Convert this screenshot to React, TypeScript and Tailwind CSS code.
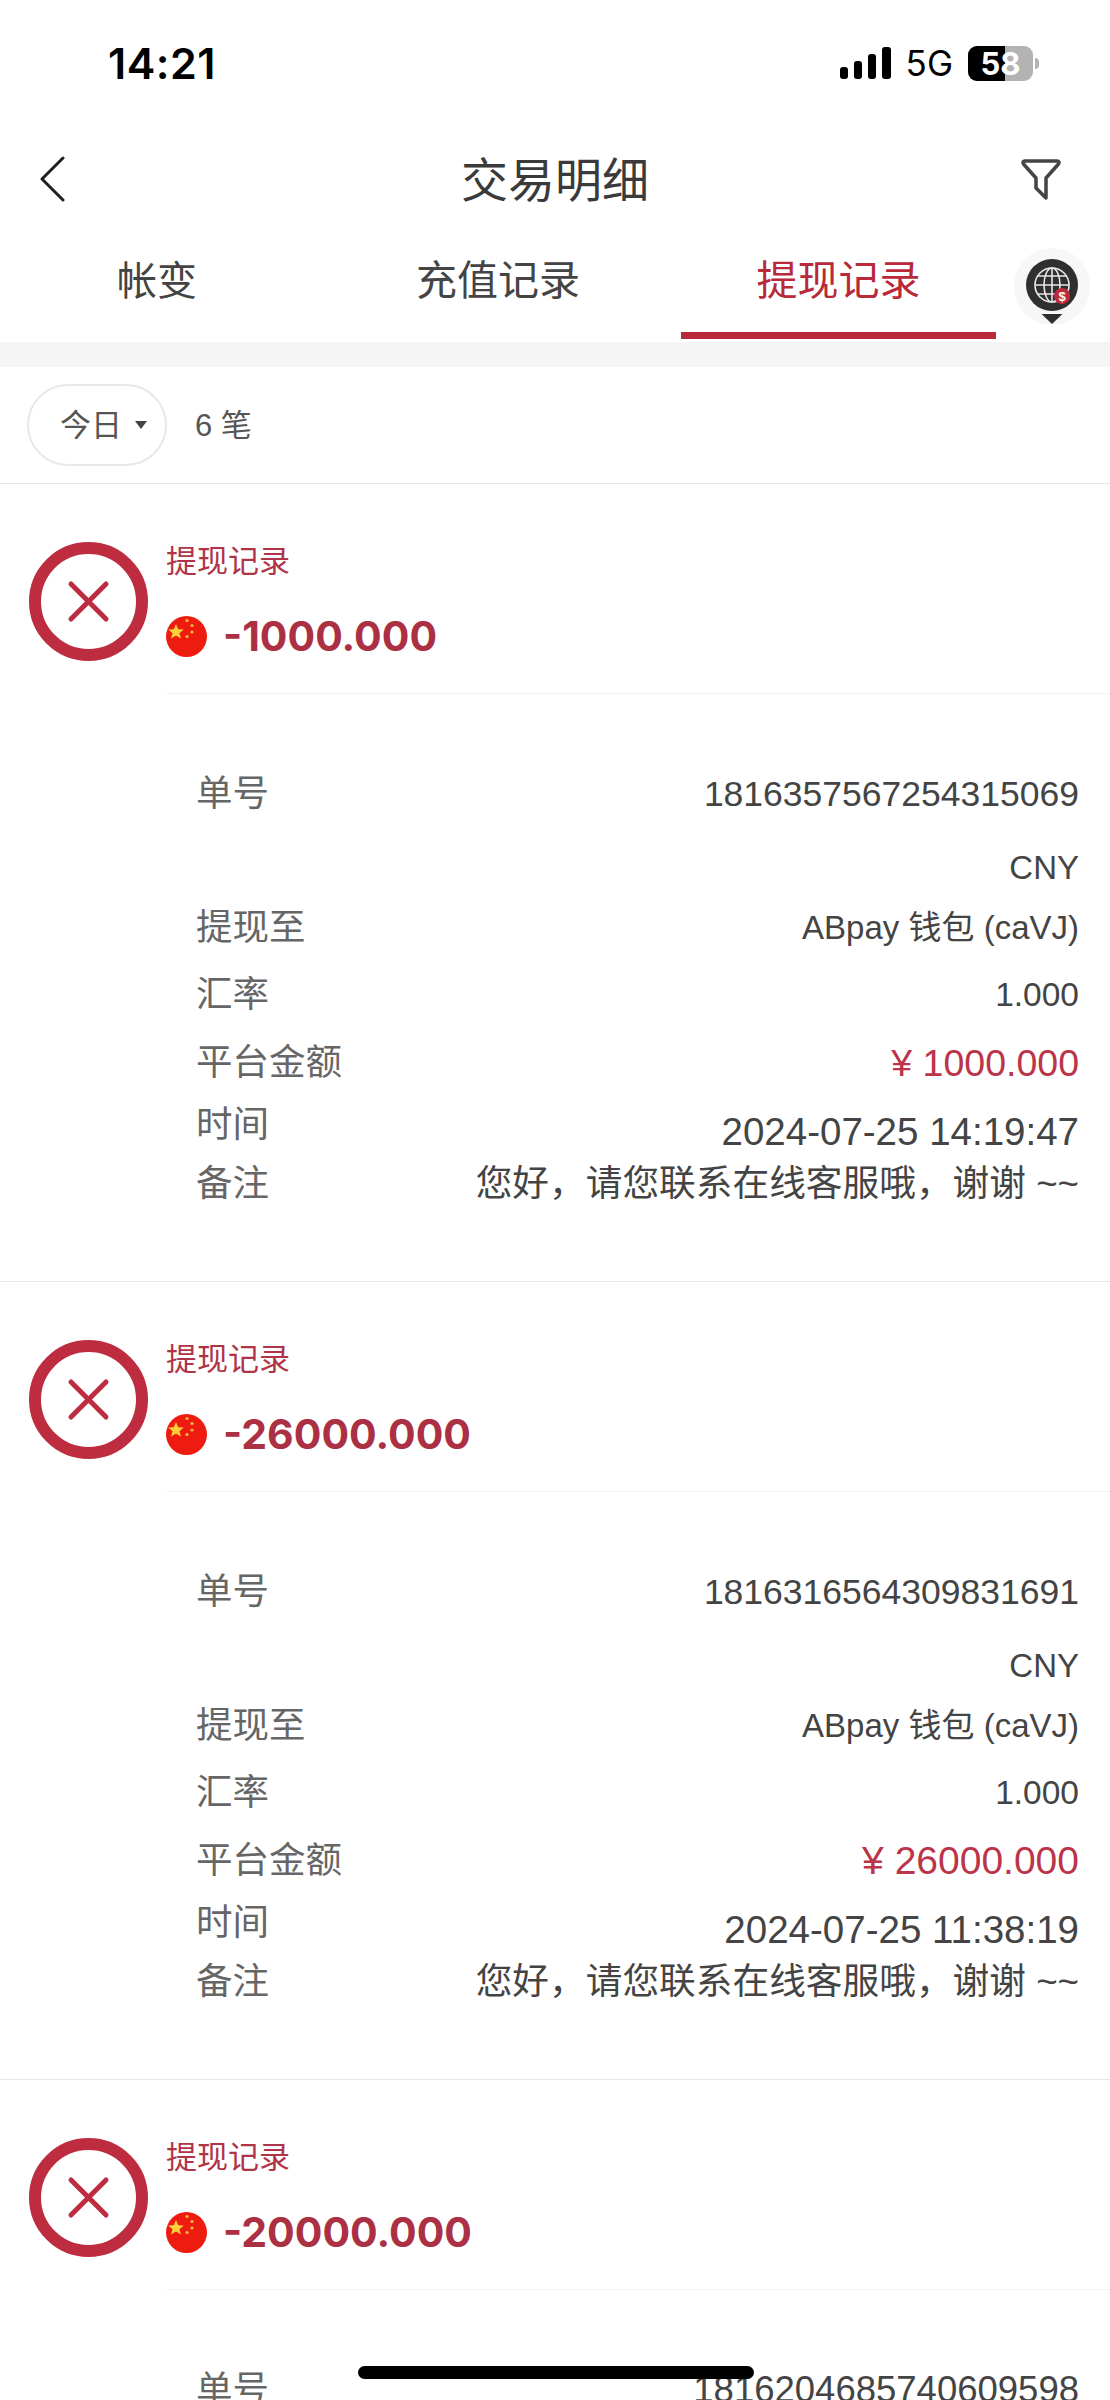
import React from 'react';

const FONT = '"Liberation Sans", "Noto Sans CJK SC", sans-serif';

interface Tx {
  amount: string;
  orderNo: string;
  orderClass: string;
  platform: string;
  platformClass: string;
  time: string;
}

const records: Tx[] = [
  { amount: '-1000.000', orderNo: '1816357567254315069', orderClass: 'text-[35.5px]', platform: '¥ 1000.000', platformClass: 'text-[37.5px]', time: '2024-07-25 14:19:47' },
  { amount: '-26000.000', orderNo: '1816316564309831691', orderClass: 'text-[35.5px]', platform: '¥ 26000.000', platformClass: 'text-[39px]', time: '2024-07-25 11:38:19' },
  { amount: '-20000.000', orderNo: '1816204685740609598', orderClass: 'text-[36.5px]', platform: '¥ 20000.000', platformClass: 'text-[39px]', time: '2024-07-25 10:02:11' },
];

const StatusBar = () => (
  <div className="flex h-[126px] items-center justify-between pl-[108px] pr-[71px] text-black">
    <span className="text-[43px] font-semibold leading-none tracking-[0.5px]" style={{ fontFamily: 'Inter, sans-serif' }}>14:21</span>
    <div className="flex items-center">
      <svg width="52" height="32" viewBox="0 0 52 32" fill="#000">
        <rect x="0" y="20" width="8" height="12" rx="3" />
        <rect x="14" y="14" width="8" height="18" rx="3" />
        <rect x="28" y="7" width="8" height="25" rx="3" />
        <rect x="42" y="0" width="9" height="32" rx="3" />
      </svg>
      <span className="ml-[14px] text-[35px] leading-none" style={{ fontFamily: 'Inter, sans-serif' }}>5G</span>
      <div className="relative ml-[15px] flex h-[35px] w-[65px] items-center justify-center overflow-hidden rounded-[9px] bg-[#b3b3b3]">
        <div className="absolute inset-y-0 left-0 w-[37px] bg-black" />
        <span className="relative text-[31px] font-bold leading-none text-white" style={{ fontFamily: 'Inter, sans-serif' }}>58</span>
      </div>
      <div className="ml-[2px] h-[11px] w-[4px] rounded-r-full bg-[#b3b3b3]" />
    </div>
  </div>
);

const NavBar = () => (
  <div className="grid h-[108px] grid-cols-[1fr_auto_1fr] items-center pl-[39px] pr-[49px]">
    <svg className="-mt-[3px]" width="26" height="46" viewBox="0 0 26 46" fill="none" stroke="#1f1f1f" strokeWidth="3" strokeLinecap="round" strokeLinejoin="round">
      <path d="M24 2 L3 23 L24 44" />
    </svg>
    <h1 className="ml-[10px] text-[47px] font-normal leading-none text-[#3a3a3a]">交易明细</h1>
    <svg className="justify-self-end" width="40" height="42" viewBox="0 0 40 42" fill="none" stroke="#444" strokeWidth="3.5" strokeLinejoin="round">
      <path d="M4 2 H36 Q39 2 37.5 5 L25 19 V39 L15 29 V19 L2.5 5 Q1 2 4 2 Z" />
    </svg>
  </div>
);

const Tabs = () => (
  <div className="flex h-[108px]">
    <div className="-ml-px flex gap-[25px]">
      <div className="h-[105px] w-[316px] pt-[25px] text-center text-[40px] leading-[44px] text-[#444]">帐变</div>
      <div className="h-[105px] w-[316px] pt-[25px] text-center text-[41px] leading-[44px] text-[#444]">充值记录</div>
      <div className="h-[105px] w-[315px] border-b-[7px] border-[#b8293a] pt-[25px] text-center text-[41px] leading-[44px] text-[#b8293a]">提现记录</div>
    </div>
    <div className="ml-[18px] mt-[14px] flex h-[77px] w-[76px] flex-col items-center rounded-full bg-[#f7f7f7] pt-[11px]">
      <svg width="54" height="66" viewBox="0 0 54 66">
        <circle cx="27" cy="26" r="26" fill="#2f2f2f" />
        <g fill="none" stroke="#e8e8e8" strokeWidth="1.6">
          <circle cx="27" cy="26" r="17" />
          <ellipse cx="27" cy="26" rx="8" ry="17" />
          <path d="M27 9 V43 M10 26 H44 M12.5 17 H41.5 M12.5 35 H41.5" />
        </g>
        <circle cx="37" cy="37" r="8" fill="#c0293c" />
        <text x="37" y="42" textAnchor="middle" fontSize="13" fontWeight="700" fill="#fff" fontFamily="Liberation Sans, sans-serif">$</text>
        <path d="M16.5 55 H37.5 L27 65 Z" fill="#2f2f2f" />
      </svg>
    </div>
  </div>
);

const FilterRow = () => (
  <div className="flex h-[117px] items-center border-b border-[#e6e6e6] pl-[27px]">
    <div className="flex h-[82px] w-[140px] items-center rounded-[41px] border-2 border-[#e8e8e8] pl-[31px] text-[#555]">
      <span className="text-[31px] leading-none">今日</span>
      <span className="ml-[13px] h-0 w-0 border-x-[6px] border-t-[8px] border-x-transparent border-t-[#444]" />
    </div>
    <span className="ml-[28px] text-[31px] leading-none text-[#555]">6 笔</span>
  </div>
);

const FailIcon = () => (
  <svg className="mt-[58px] shrink-0" width="119" height="119" viewBox="0 0 119 119" fill="none" stroke="#bd2c3f">
    <circle cx="59.5" cy="59.5" r="53.5" strokeWidth="12" />
    <path d="M42 42 L77 77 M77 42 L42 77" strokeWidth="5" strokeLinecap="round" />
  </svg>
);

const Flag = () => (
  <svg className="shrink-0" width="41" height="41" viewBox="0 0 41 41">
    <circle cx="20.5" cy="20.5" r="20.5" fill="#ee1c10" />
    <path d="M10 8 L12.2 13.3 L17.8 13.6 L13.4 17.2 L15 22.6 L10 19.6 L5 22.6 L6.6 17.2 L2.2 13.6 L7.8 13.3 Z" fill="#fbd13a" />
    <g fill="#f6b93a">
      <circle cx="21" cy="4.5" r="1.6" />
      <circle cx="26" cy="9.5" r="1.6" />
      <circle cx="26" cy="16" r="1.6" />
      <circle cx="21" cy="20.5" r="1.6" />
    </g>
  </svg>
);

const Record = ({ tx }: { tx: Tx }) => (
  <div className="border-b border-[#e8e8e8]">
    <div className="flex pl-[29px]">
      <FailIcon />
      <div className="ml-[18px] flex-1 border-b border-[#f2f2f2] pb-[32px] pt-[58px]">
        <div className="text-[31px] leading-[40px] text-[#b03347]">提现记录</div>
        <div className="mt-[29px] flex h-[50px] items-center">
          <Flag />
          <span className="ml-[16px] text-[41px] font-bold leading-none text-[#ac3044]" style={{ fontFamily: 'Inter, sans-serif' }}>{tx.amount}</span>
        </div>
      </div>
    </div>
    <div className="pb-[75px] pl-[196px] pr-[31px] pt-[78px] leading-[44px] text-[#444]">
      <div className="flex items-center justify-between">
        <span className="text-[36.5px] text-[#666]">单号</span>
        <span className={tx.orderClass}>{tx.orderNo}</span>
      </div>
      <div className="mt-[30px] text-right text-[33px]">CNY</div>
      <div className="mt-[16px] flex items-center justify-between">
        <span className="text-[36.5px] text-[#666]">提现至</span>
        <span className="text-[33px]">ABpay 钱包 (caVJ)</span>
      </div>
      <div className="mt-[23px] flex items-center justify-between">
        <span className="text-[36.5px] text-[#666]">汇率</span>
        <span className="text-[33.5px]">1.000</span>
      </div>
      <div className="mt-[24px] flex items-center justify-between">
        <span className="text-[36.5px] text-[#666]">平台金额</span>
        <span className={`${tx.platformClass} text-[#bb3449]`}>{tx.platform}</span>
      </div>
      <div className="mt-[18px] flex h-[51px] justify-between">
        <span className="text-[36.5px] text-[#666]">时间</span>
        <span className="mt-[7px] text-[38.5px]">{tx.time}</span>
      </div>
      <div className="mt-[8px] flex items-center justify-between">
        <span className="text-[36.5px] text-[#666]">备注</span>
        <span className="text-[36.7px]">您好，请您联系在线客服哦，谢谢 ~~</span>
      </div>
    </div>
  </div>
);

export default function App() {
  return (
    <div className="relative h-[2400px] w-[1110px] overflow-hidden bg-white" style={{ fontFamily: FONT }}>
      <StatusBar />
      <NavBar />
      <Tabs />
      <div className="h-[25px] bg-[#f5f5f5]" />
      <FilterRow />
      {records.map((tx) => (
        <Record key={tx.orderNo} tx={tx} />
      ))}
      <div className="absolute left-[358px] top-[2366px] h-[13px] w-[396px] rounded-full bg-black" />
    </div>
  );
}
